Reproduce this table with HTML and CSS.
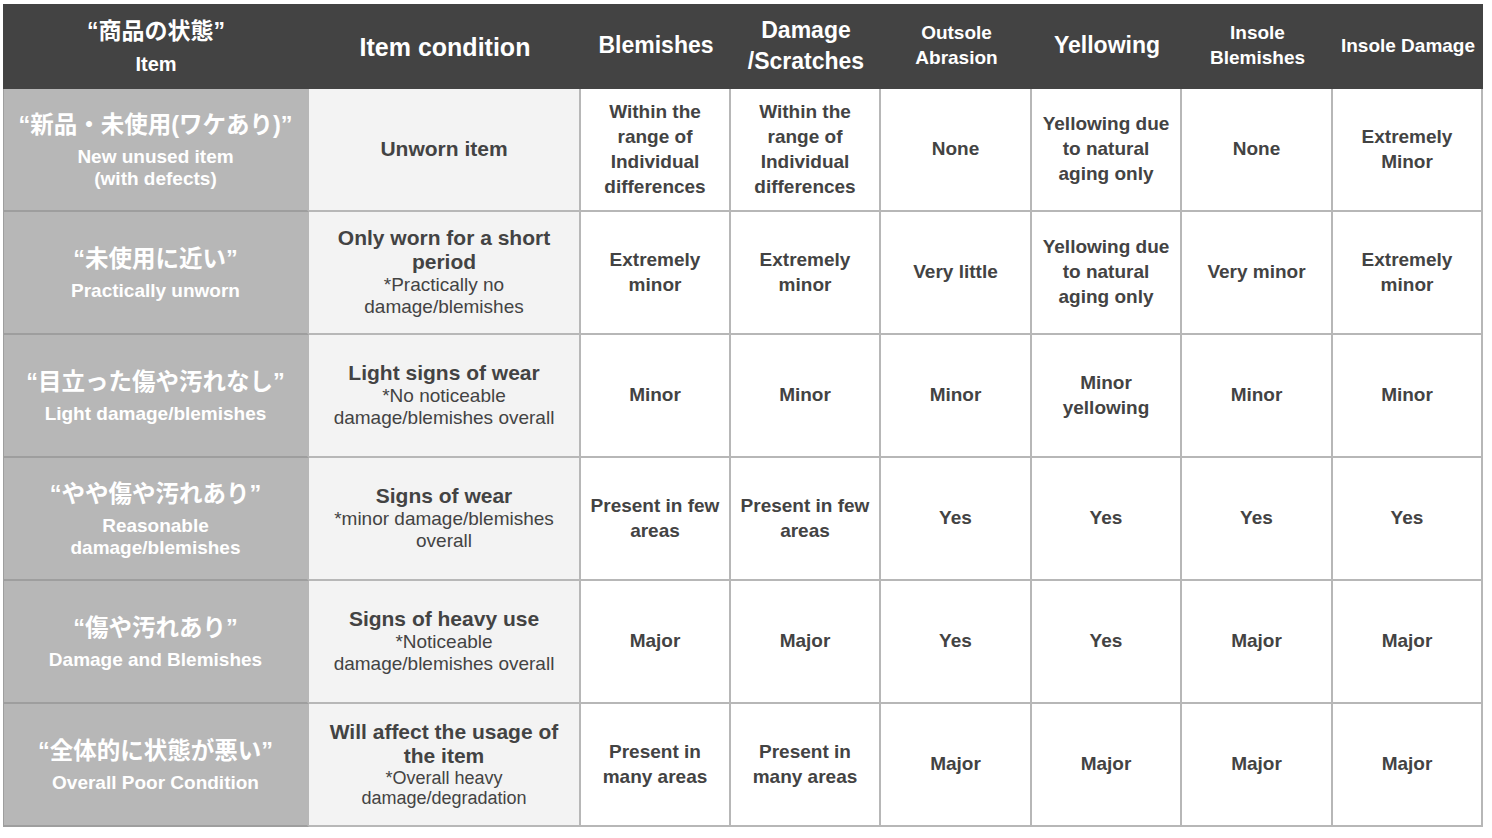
FILE: index.html
```html
<!DOCTYPE html>
<html lang="ja">
<head>
<meta charset="utf-8">
<title>Item condition</title>
<link rel="stylesheet" href="styles.css">
</head>
<body>
<div class="sheet">
  <div class="cell hd hd-first"><div class="jp">“商品の状態”</div><div class="en">Item</div></div>
  <div class="cell hd hd-xl">Item condition</div>
  <div class="cell hd hd-lg">Blemishes</div>
  <div class="cell hd hd-lg hd-two">Damage<br>/Scratches</div>
  <div class="cell hd hd-sm">Outsole<br>Abrasion</div>
  <div class="cell hd hd-lg">Yellowing</div>
  <div class="cell hd hd-sm">Insole<br>Blemishes</div>
  <div class="cell hd hd-sm">Insole Damage</div>

  <div class="cell c1"><div class="jp">“新品・未使用(ワケあり)”</div><div class="en">New unused item<br>(with defects)</div></div>
  <div class="cell c2"><div class="title">Unworn item</div></div>
  <div class="cell cv">Within the<br>range of<br>Individual<br>differences</div>
  <div class="cell cv">Within the<br>range of<br>Individual<br>differences</div>
  <div class="cell cv">None</div>
  <div class="cell cv">Yellowing due<br>to natural<br>aging only</div>
  <div class="cell cv">None</div>
  <div class="cell cv">Extremely<br>Minor</div>

  <div class="cell c1"><div class="jp">“未使用に近い”</div><div class="en">Practically unworn</div></div>
  <div class="cell c2"><div class="title">Only worn for a short<br>period</div><div class="note">*Practically no<br>damage/blemishes</div></div>
  <div class="cell cv">Extremely<br>minor</div>
  <div class="cell cv">Extremely<br>minor</div>
  <div class="cell cv">Very little</div>
  <div class="cell cv">Yellowing due<br>to natural<br>aging only</div>
  <div class="cell cv">Very minor</div>
  <div class="cell cv">Extremely<br>minor</div>

  <div class="cell c1"><div class="jp">“目立った傷や汚れなし”</div><div class="en">Light damage/blemishes</div></div>
  <div class="cell c2"><div class="title">Light signs of wear</div><div class="note">*No noticeable<br>damage/blemishes overall</div></div>
  <div class="cell cv">Minor</div>
  <div class="cell cv">Minor</div>
  <div class="cell cv">Minor</div>
  <div class="cell cv">Minor<br>yellowing</div>
  <div class="cell cv">Minor</div>
  <div class="cell cv">Minor</div>

  <div class="cell c1"><div class="jp">“やや傷や汚れあり”</div><div class="en">Reasonable<br>damage/blemishes</div></div>
  <div class="cell c2"><div class="title">Signs of wear</div><div class="note">*minor damage/blemishes<br>overall</div></div>
  <div class="cell cv">Present in few<br>areas</div>
  <div class="cell cv">Present in few<br>areas</div>
  <div class="cell cv">Yes</div>
  <div class="cell cv">Yes</div>
  <div class="cell cv">Yes</div>
  <div class="cell cv">Yes</div>

  <div class="cell c1"><div class="jp">“傷や汚れあり”</div><div class="en">Damage and Blemishes</div></div>
  <div class="cell c2"><div class="title">Signs of heavy use</div><div class="note">*Noticeable<br>damage/blemishes overall</div></div>
  <div class="cell cv">Major</div>
  <div class="cell cv">Major</div>
  <div class="cell cv">Yes</div>
  <div class="cell cv">Yes</div>
  <div class="cell cv">Major</div>
  <div class="cell cv">Major</div>

  <div class="cell c1"><div class="jp">“全体的に状態が悪い”</div><div class="en">Overall Poor Condition</div></div>
  <div class="cell c2"><div class="title">Will affect the usage of<br>the item</div><div class="note note-sm">*Overall heavy<br>damage/degradation</div></div>
  <div class="cell cv">Present in<br>many areas</div>
  <div class="cell cv">Present in<br>many areas</div>
  <div class="cell cv">Major</div>
  <div class="cell cv">Major</div>
  <div class="cell cv">Major</div>
  <div class="cell cv">Major</div>
</div>
</body>
</html>
```

FILE: styles.css
```css
html, body {
  margin: 0;
  background: #ffffff;
}

body {
  padding: 4px 0 0 3px;
  font-family: "Liberation Sans", "Noto Sans CJK JP", Arial, sans-serif;
}

.sheet {
  display: grid;
  grid-template-columns: 306px 272px 150px 150px 151px 150px 151px 150px;
  grid-template-rows: 85px repeat(6, 123px);
  width: 1480px;
}

.cell {
  box-sizing: border-box;
  display: flex;
  flex-direction: column;
  align-items: center;
  justify-content: center;
  text-align: center;
  padding-bottom: 2px;
}

/* header */
.hd {
  background: #434343;
  color: #ffffff;
  font-weight: bold;
  padding-bottom: 3px;
}

.hd-first {
  padding-bottom: 0;
  padding-top: 1px;
}

.hd-first .jp {
  font-size: 23px;
  line-height: 34px;
}

.hd-first .en {
  font-size: 20px;
  line-height: 32px;
}

.hd-xl {
  font-size: 25px;
  line-height: 30px;
  padding-bottom: 0;
}

.hd-lg {
  font-size: 23px;
  line-height: 31px;
}

.hd-two {
  padding-bottom: 1px;
}

.hd-sm {
  font-size: 19px;
  line-height: 25px;
}

/* first column */
.c1 {
  background: #b7b7b7;
  color: #ffffff;
  font-weight: bold;
  border-left: 1px solid #9e9e9e;
  border-right: 2px solid #b7b7b7;
  border-bottom: 2px solid #9e9e9e;
}

.c1 .jp {
  font-size: 23.5px;
  line-height: 34px;
  margin-bottom: 4px;
}

.c1 .en {
  font-size: 19px;
  line-height: 22px;
}

/* second column */
.c2 {
  background: #f3f3f3;
  color: #434343;
  border-right: 2px solid #b7b7b7;
  border-bottom: 2px solid #b7b7b7;
}

.c2 .title {
  font-size: 21px;
  line-height: 24px;
  font-weight: bold;
}

.c2 .note {
  font-size: 19px;
  line-height: 22px;
}

.c2 .note-sm {
  font-size: 18px;
  line-height: 20px;
}

/* value cells */
.cv {
  background: #ffffff;
  color: #434343;
  font-weight: bold;
  font-size: 19px;
  line-height: 25px;
  border-right: 2px solid #b7b7b7;
  border-bottom: 2px solid #b7b7b7;
}
```
